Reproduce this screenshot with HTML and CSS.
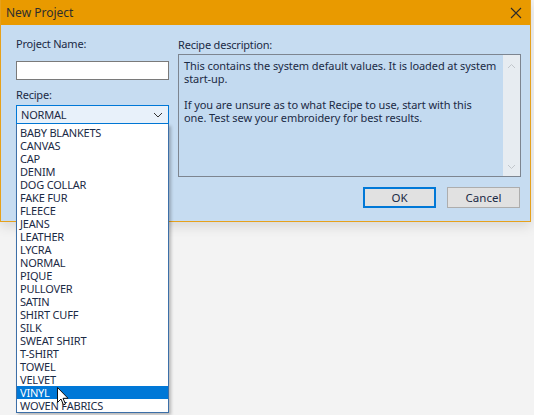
FILE: index.html
```html
<!DOCTYPE html>
<html lang="en">
<head>
    <title>New Project</title>
    <link rel="stylesheet" href="styles.css">
</head>
<body>

<div id="window">
    <!-- Title bar -->
    <div id="title-bar">
        <span id="title">New Project</span>
        <svg id="close" width="12" height="12" viewBox="0 0 12 12">
            <path d="M1 1 L11 11 M11 1 L1 11" stroke="#2b2b2b" stroke-width="1.1" fill="none"/>
        </svg>
    </div>

    <div id="dialog-body">
        <div class="col-left">
            <label class="field-label">Project Name:</label>
            <div class="text-input"></div>
            <label class="field-label recipe-label">Recipe:</label>
            <div class="combo">
                <span>NORMAL</span>
                <svg width="10" height="6" viewBox="0 0 10 6">
                    <path d="M1 1 L5 5 L9 1" stroke="#333" stroke-width="1" fill="none"/>
                </svg>
            </div>
        </div>

        <div class="col-right">
            <label class="field-label">Recipe description:</label>
            <div class="desc-box">
                <div class="desc-text">
                    <p>This contains the system default values. It is loaded at system start-up.</p>
                    <p>If you are unsure as to what Recipe to use, start with this<br>one. Test sew your embroidery for best results.</p>
                </div>
                <div class="scrollbar">
                    <svg width="9" height="6" viewBox="0 0 9 6"><path d="M1 5 L4.5 1.5 L8 5" stroke="#c2c7cc" fill="none"/></svg>
                    <svg width="9" height="6" viewBox="0 0 9 6"><path d="M1 1 L4.5 4.5 L8 1" stroke="#c2c7cc" fill="none"/></svg>
                </div>
            </div>
            <div class="buttons">
                <button class="btn btn-default">OK</button>
                <button class="btn">Cancel</button>
            </div>
        </div>
    </div>
</div>

<!-- open dropdown list of the Recipe combo -->
<ul id="recipe-list">
    <li>BABY BLANKETS</li>
    <li>CANVAS</li>
    <li>CAP</li>
    <li>DENIM</li>
    <li>DOG COLLAR</li>
    <li>FAKE FUR</li>
    <li>FLEECE</li>
    <li>JEANS</li>
    <li>LEATHER</li>
    <li>LYCRA</li>
    <li>NORMAL</li>
    <li>PIQUE</li>
    <li>PULLOVER</li>
    <li>SATIN</li>
    <li>SHIRT CUFF</li>
    <li>SILK</li>
    <li>SWEAT SHIRT</li>
    <li>T-SHIRT</li>
    <li>TOWEL</li>
    <li>VELVET</li>
    <li class="selected">VINYL</li>
    <li>WOVEN FABRICS</li>
</ul>

<svg id="cursor" width="12" height="19" viewBox="0 0 12 19">
    <path d="M0.5 0.5 L0.5 15.5 L4 12 L6.5 18 L8.5 17 L6 11.3 L11 11.3 Z" fill="#fff" stroke="#111" stroke-width="1" stroke-linejoin="round"/>
</svg>

</body>
</html>
```

FILE: styles.css
```css
body {
    margin: 0;
    background-color: #f3f3f3;
    font-family: "Noto Sans", "Open Sans", sans-serif;
    font-size: 11px;
    letter-spacing: -0.2px;
    color: #1b2a45;
    height: 415px;
    overflow: hidden;
    position: relative;
}

#window {
    width: 529px;
    border: 1px solid #e6a11c;
    border-top: none;
    box-shadow: 0 4px 12px rgba(0, 0, 0, 0.12);
}

#title-bar {
    height: 25px;
    background-color: #e99a00;
    display: flex;
    align-items: center;
    justify-content: space-between;
    padding: 0 8px 0 5px;
}

#title {
    font-size: 12px;
    letter-spacing: 0;
    color: #2e2e2e;
}

#dialog-body {
    background-color: #c6dcf1;
    display: grid;
    grid-template-columns: 153px 343px;
    gap: 9px;
    padding: 12px 10px 12px 15px;
    height: 172px;
}

.field-label {
    display: block;
    line-height: 14px;
    color: #1b2a45;
}

.text-input {
    margin-top: 10px;
    height: 17px;
    background: #fff;
    border: 1px solid #7a7a7a;
}

.recipe-label {
    margin-top: 8px;
}

.combo {
    margin-top: 3px;
    height: 17px;
    border: 1px solid #0078d7;
    background: #e8f1fa;
    display: flex;
    align-items: center;
    justify-content: space-between;
    padding: 0 5px 0 4px;
}

.col-right {
    padding-top: 1px;
}

.desc-box {
    margin-top: 2px;
    height: 121px;
    border: 1px solid #7d8590;
    background: #c3daf0;
    display: flex;
}

.desc-text {
    flex: 1;
    padding: 4px 5px 2px 5px;
    line-height: 13px;
    letter-spacing: -0.08px;
}

.desc-text p {
    margin: 0 0 13px 0;
}

.scrollbar {
    width: 17px;
    background: #e7ecf1;
    display: flex;
    flex-direction: column;
    justify-content: space-between;
    align-items: center;
    padding: 8px 0 6px 0;
}

.buttons {
    margin-top: 10px;
    display: flex;
    justify-content: flex-end;
    gap: 11px;
    padding-right: 1px;
}

.btn {
    width: 73px;
    height: 21px;
    font-family: "Noto Sans", "Open Sans", sans-serif;
    font-size: 11.5px;
    color: #1b2a45;
    background: #e1e1e1;
    border: 1px solid #adadad;
    padding: 0;
}

.btn-default {
    border: 2px solid #0078d7;
}

#recipe-list {
    position: absolute;
    left: 16px;
    top: 124px;
    width: 151px;
    margin: 0;
    padding: 2px 0 0 0;
    list-style: none;
    background: #fff;
    border: 1px solid #3c6fa8;
    border-top: none;
    box-shadow: 2px 2px 3px rgba(0, 0, 0, 0.25);
}

#recipe-list li {
    height: 13px;
    line-height: 13px;
    padding-left: 3px;
    color: #1b2a45;
}

#recipe-list li.selected {
    background: #0078d7;
    color: #fff;
}

#cursor {
    position: absolute;
    left: 57px;
    top: 387px;
}
```
